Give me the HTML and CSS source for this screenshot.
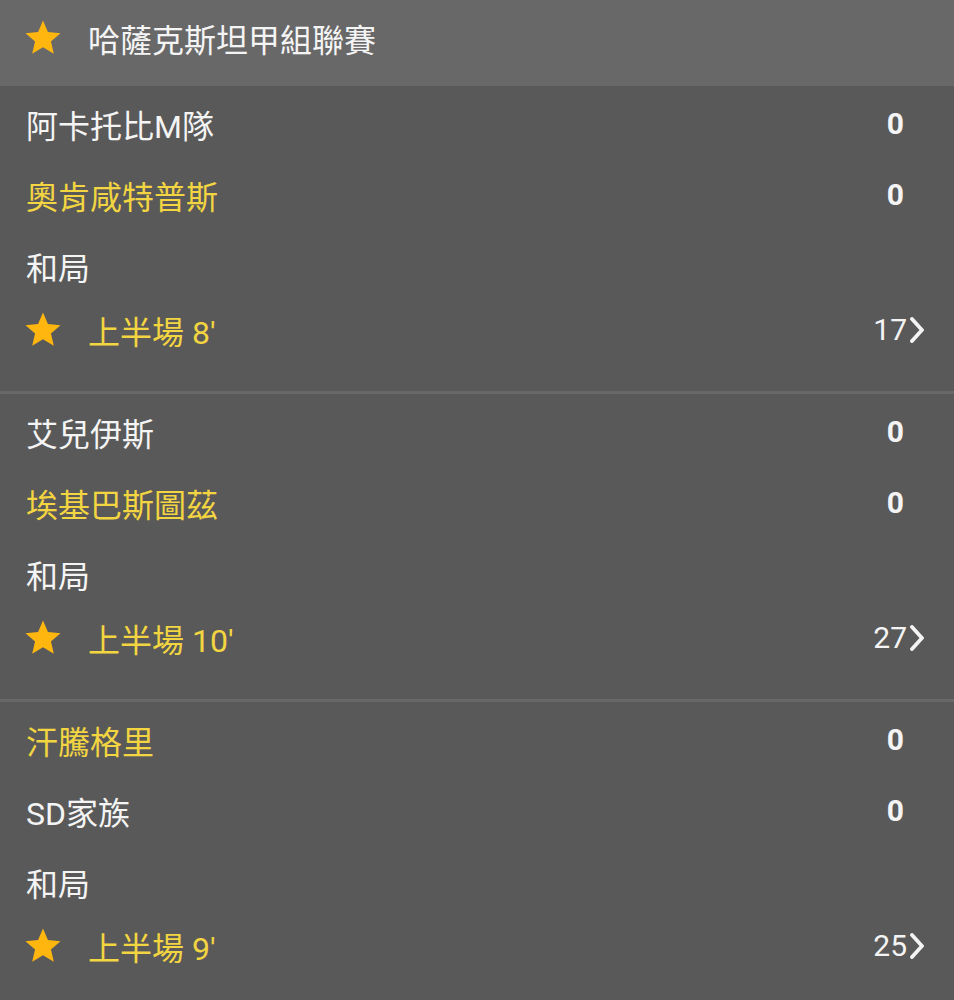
FILE: index.html
```html
<!DOCTYPE html>
<html lang="zh-Hant">
<head>
  <meta charset="UTF-8">
  <meta name="viewport" content="width=device-width, initial-scale=1">
  <title>哈薩克斯坦甲組聯賽</title>
  <link rel="stylesheet" href="styles.css">
</head>
<body>
  <div class="league">
    <svg class="star" viewBox="0 0 24 24"><path d="M12 17.27L18.18 21l-1.64-7.03L22 9.24l-7.19-.61L12 2 9.19 8.63 2 9.24l5.46 4.73L5.82 21z"/></svg>
    <span class="league-name">哈薩克斯坦甲組聯賽</span>
  </div>

  <div class="match">
    <div class="row"><span class="team">阿卡托比M隊</span><span class="score">0</span></div>
    <div class="row"><span class="team fav">奧肯咸特普斯</span><span class="score">0</span></div>
    <div class="row"><span class="team">和局</span></div>
    <div class="row status">
      <svg class="star" viewBox="0 0 24 24"><path d="M12 17.27L18.18 21l-1.64-7.03L22 9.24l-7.19-.61L12 2 9.19 8.63 2 9.24l5.46 4.73L5.82 21z"/></svg>
      <span class="time">上半場 8'</span>
      <span class="more">17<svg class="chev" viewBox="0 0 14 26"><polyline points="2,2 12,13 2,24"/></svg></span>
    </div>
  </div>

  <div class="match">
    <div class="row"><span class="team">艾兒伊斯</span><span class="score">0</span></div>
    <div class="row"><span class="team fav">埃基巴斯圖茲</span><span class="score">0</span></div>
    <div class="row"><span class="team">和局</span></div>
    <div class="row status">
      <svg class="star" viewBox="0 0 24 24"><path d="M12 17.27L18.18 21l-1.64-7.03L22 9.24l-7.19-.61L12 2 9.19 8.63 2 9.24l5.46 4.73L5.82 21z"/></svg>
      <span class="time">上半場 10'</span>
      <span class="more">27<svg class="chev" viewBox="0 0 14 26"><polyline points="2,2 12,13 2,24"/></svg></span>
    </div>
  </div>

  <div class="match">
    <div class="row"><span class="team fav">汗騰格里</span><span class="score">0</span></div>
    <div class="row"><span class="team">SD家族</span><span class="score">0</span></div>
    <div class="row"><span class="team">和局</span></div>
    <div class="row status">
      <svg class="star" viewBox="0 0 24 24"><path d="M12 17.27L18.18 21l-1.64-7.03L22 9.24l-7.19-.61L12 2 9.19 8.63 2 9.24l5.46 4.73L5.82 21z"/></svg>
      <span class="time">上半場 9'</span>
      <span class="more">25<svg class="chev" viewBox="0 0 14 26"><polyline points="2,2 12,13 2,24"/></svg></span>
    </div>
  </div>
</body>
</html>
```

FILE: styles.css
```css
body {
  margin: 0;
  background: #595959;
  font-family: Roboto, "Noto Sans CJK TC", sans-serif;
  color: #f4f4f4;
  height: 1000px;
  overflow: hidden;
}
.league {
  display: flex;
  align-items: center;
  height: 76px;
  padding: 0 0 10px 22px;
  background: #686868;
  font-size: 32px;
}
.star {
  width: 42px;
  height: 42px;
  fill: #ffb70f;
  flex: none;
}
.league-name {
  margin-left: 24px;
}
.match {
  padding: 2px 0 33px;
  border-bottom: 3px solid #686868;
}
.row {
  display: flex;
  align-items: center;
  justify-content: space-between;
  height: 71px;
  padding: 0 50px 0 26px;
  font-size: 32px;
}
.fav,
.time {
  color: #f2d541;
}
.score {
  font-weight: bold;
  font-size: 30px;
}
.status {
  height: 57px;
  padding: 0 30px 0 22px;
  justify-content: flex-start;
}
.time {
  margin-left: 24px;
}
.more {
  margin-left: auto;
  display: flex;
  align-items: center;
  font-size: 30px;
}
.chev {
  width: 14px;
  height: 26px;
  margin-left: 3px;
  fill: none;
  stroke: #f4f4f4;
  stroke-width: 3.8;
  stroke-linecap: round;
  stroke-linejoin: miter;
}
```
